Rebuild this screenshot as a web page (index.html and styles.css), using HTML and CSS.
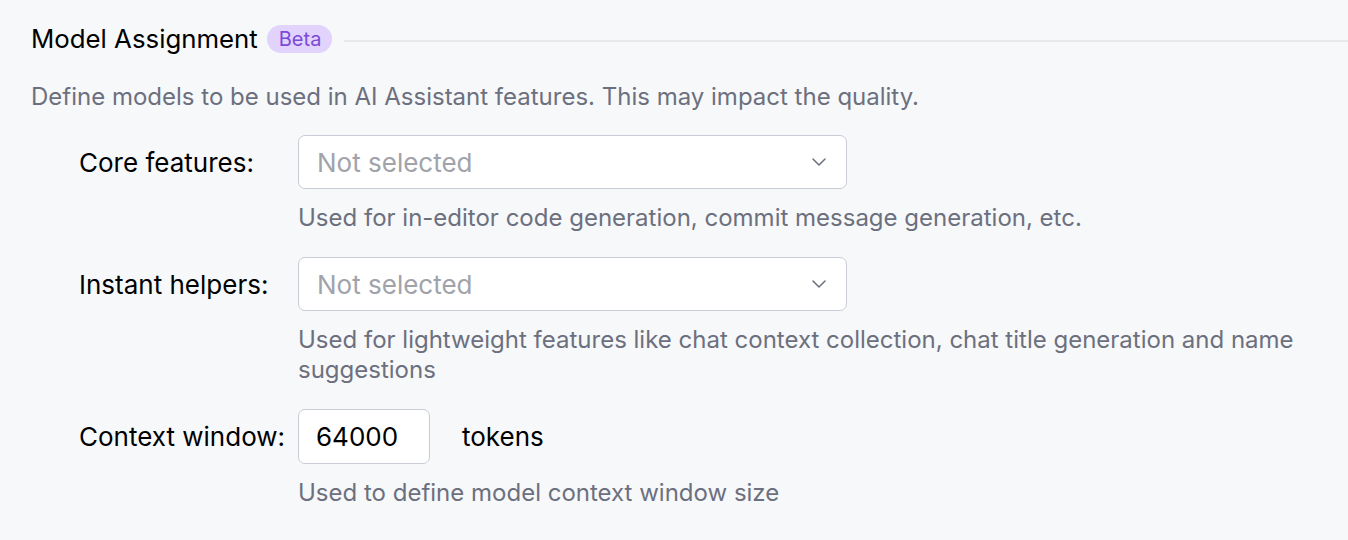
FILE: index.html
```html
<!DOCTYPE html>
<html lang="en">
<head>
<meta charset="utf-8">
<title>Model Assignment</title>
<link rel="stylesheet" href="styles.css">
</head>
<body>
<section class="settings">
  <header class="group-header">
    <h2 class="group-title">Model Assignment</h2>
    <span class="badge">Beta</span>
    <span class="divider"></span>
  </header>
  <p class="group-desc">Define models to be used in AI Assistant features. This may impact the quality.</p>

  <div class="form">
    <div class="row">
      <label class="label">Core features:</label>
      <div class="field">
        <div class="select">
          <span class="placeholder">Not selected</span>
          <svg class="chevron" width="14" height="8" viewBox="0 0 14 8"><path d="M1 1 L7 7 L13 1" fill="none" stroke="#6c707e" stroke-width="1.5" stroke-linecap="round" stroke-linejoin="round"/></svg>
        </div>
        <p class="help">Used for in-editor code generation, commit message generation, etc.</p>
      </div>
    </div>

    <div class="row">
      <label class="label">Instant helpers:</label>
      <div class="field">
        <div class="select">
          <span class="placeholder">Not selected</span>
          <svg class="chevron" width="14" height="8" viewBox="0 0 14 8"><path d="M1 1 L7 7 L13 1" fill="none" stroke="#6c707e" stroke-width="1.5" stroke-linecap="round" stroke-linejoin="round"/></svg>
        </div>
        <p class="help">Used for lightweight features like chat context collection, chat title generation and name suggestions</p>
      </div>
    </div>

    <div class="row">
      <label class="label">Context window:</label>
      <div class="field">
        <div class="inline">
          <div class="number">64000</div>
          <span class="unit">tokens</span>
        </div>
        <p class="help">Used to define model context window size</p>
      </div>
    </div>
  </div>
</section>
</body>
</html>
```
FILE: styles.css
```css
* { box-sizing: border-box; }

html, body {
  margin: 0;
  padding: 0;
}

body {
  background: #f7f8fa;
  font-family: Inter, "Noto Sans", sans-serif;
  color: #000;
  width: 1348px;
  height: 540px;
  overflow: hidden;
}

.settings {
  padding: 24px 0 0 31px;
}

.group-header {
  display: flex;
  align-items: center;
  height: 30px;
}

.group-title {
  margin: 0;
  font-size: 25.8px;
  font-weight: 400;
  line-height: 30px;
  white-space: nowrap;
}

.badge {
  margin-left: 9px;
  height: 28px;
  padding: 0 11px 0 12px;
  border-radius: 14px;
  background: #e2d3fc;
  color: #7a4ad9;
  font-size: 20px;
  line-height: 28px;
}

.divider {
  flex: 1;
  height: 2px;
  margin-left: 12px;
  margin-top: 3px;
  background: #e7e8ec;
}

.group-desc {
  margin: 29px 0 0;
  font-size: 24px;
  line-height: 28px;
  color: #6c707e;
}

.form {
  margin-top: 24px;
  display: flex;
  flex-direction: column;
  gap: 24px;
}

.row {
  display: grid;
  grid-template-columns: 219px 1fr;
  padding-left: 48px;
}

.label {
  height: 54px;
  display: flex;
  align-items: center;
  font-size: 26px;
  white-space: nowrap;
}

.field {
  padding-right: 30px;
}

.select {
  width: 549px;
  height: 54px;
  background: #fff;
  border: 1px solid #c9ccd6;
  border-radius: 7px;
  display: flex;
  align-items: center;
  justify-content: space-between;
  padding: 0 20px 0 18px;
}

.placeholder {
  font-size: 26px;
  color: #a1a3ab;
}

.chevron {
  display: block;
}

.help {
  margin: 14px 0 0;
  font-size: 24px;
  line-height: 30px;
  color: #6c707e;
}

.inline {
  display: flex;
  align-items: center;
  gap: 32px;
}

.number {
  width: 132px;
  height: 55px;
  background: #fff;
  border: 1px solid #c9ccd6;
  border-radius: 7px;
  padding-left: 17px;
  display: flex;
  align-items: center;
  font-size: 26px;
}

.unit {
  font-size: 26px;
}
```
